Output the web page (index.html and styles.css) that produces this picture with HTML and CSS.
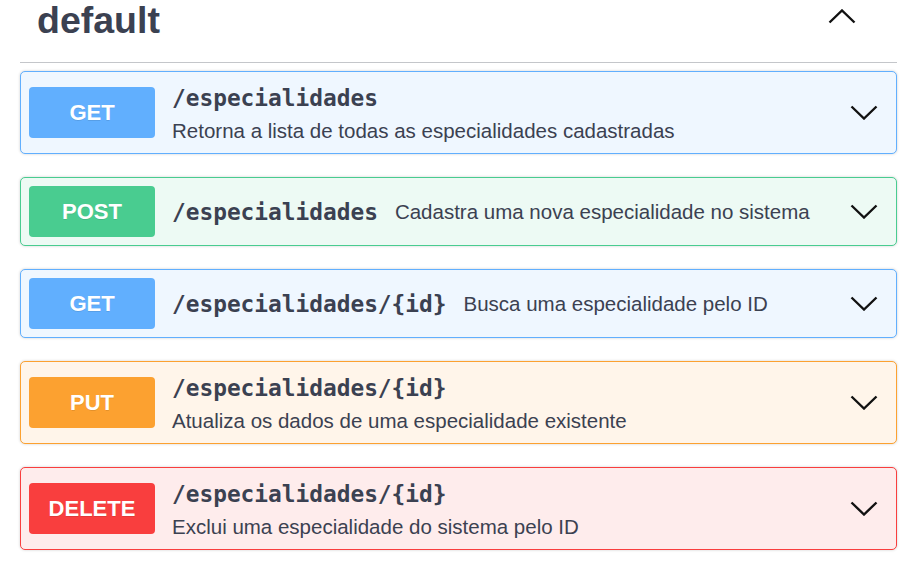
FILE: index.html
```html
<!DOCTYPE html>
<html lang="pt">
<head>
  <meta charset="UTF-8" />
  <title>Swagger UI - default</title>
  <link rel="stylesheet" href="styles.css">
</head>
<body>

  <div class="tag-section">
    <div class="tag-header">
      <h3>default</h3>
      <svg class="arrow-up" width="28" height="15" viewBox="0 0 28 15">
        <polyline points="1.5,13.5 14,1.5 26.5,13.5" />
      </svg>
    </div>

    <div class="opblock get">
      <span class="method">GET</span>
      <div class="summary stacked">
        <span class="path">/especialidades</span>
        <span class="desc">Retorna a lista de todas as especialidades cadastradas</span>
      </div>
      <svg class="arrow" width="28" height="15" viewBox="0 0 28 15"><polyline points="1.5,1.5 14,13.5 26.5,1.5" /></svg>
    </div>

    <div class="opblock post">
      <span class="method">POST</span>
      <div class="summary">
        <span class="path">/especialidades</span>
        <span class="desc">Cadastra uma nova especialidade no sistema</span>
      </div>
      <svg class="arrow" width="28" height="15" viewBox="0 0 28 15"><polyline points="1.5,1.5 14,13.5 26.5,1.5" /></svg>
    </div>

    <div class="opblock get">
      <span class="method">GET</span>
      <div class="summary">
        <span class="path">/especialidades/{id}</span>
        <span class="desc">Busca uma especialidade pelo ID</span>
      </div>
      <svg class="arrow" width="28" height="15" viewBox="0 0 28 15"><polyline points="1.5,1.5 14,13.5 26.5,1.5" /></svg>
    </div>

    <div class="opblock put">
      <span class="method">PUT</span>
      <div class="summary stacked">
        <span class="path">/especialidades/{id}</span>
        <span class="desc">Atualiza os dados de uma especialidade existente</span>
      </div>
      <svg class="arrow" width="28" height="15" viewBox="0 0 28 15"><polyline points="1.5,1.5 14,13.5 26.5,1.5" /></svg>
    </div>

    <div class="opblock delete">
      <span class="method">DELETE</span>
      <div class="summary stacked">
        <span class="path">/especialidades/{id}</span>
        <span class="desc">Exclui uma especialidade do sistema pelo ID</span>
      </div>
      <svg class="arrow" width="28" height="15" viewBox="0 0 28 15"><polyline points="1.5,1.5 14,13.5 26.5,1.5" /></svg>
    </div>
  </div>

</body>
</html>
```

FILE: styles.css
```css
body {
  margin: 0;
  background: #fff;
  font-family: "Liberation Sans", Arial, sans-serif;
  color: #3b4151;
}

.tag-section {
  margin: 0 13px 0 20px;
}

.tag-header {
  display: flex;
  justify-content: space-between;
  align-items: flex-start;
  height: 62px;
  padding: 0 41px 0 17px;
  border-bottom: 1px solid rgba(59, 65, 81, 0.3);
}

.tag-header h3 {
  margin: 0;
  font-size: 37.5px;
  line-height: 40px;
  font-weight: bold;
  color: #3b4151;
}

.arrow-up {
  margin-top: 9px;
}

.arrow-up polyline,
.arrow polyline {
  fill: none;
  stroke: #111;
  stroke-width: 2.4;
}

.opblock {
  display: flex;
  align-items: center;
  margin-bottom: 23px;
  padding: 8px;
  border: 1px solid;
  border-radius: 5px;
  box-shadow: 0 0 3px rgba(0, 0, 0, 0.19);
}

.tag-header + .opblock {
  margin-top: 8px;
}

.opblock .method {
  flex: none;
  width: 126px;
  height: 51px;
  line-height: 51px;
  text-align: center;
  border-radius: 4px;
  color: #fff;
  font-size: 22px;
  font-weight: bold;
  text-shadow: 0 1px 0 rgba(0, 0, 0, 0.1);
}

.summary {
  display: flex;
  align-items: center;
  margin-left: 17px;
}

.summary.stacked {
  flex-direction: column;
  align-items: flex-start;
}

.path {
  font-family: "DejaVu Sans Mono", monospace;
  font-weight: bold;
  font-size: 22.8px;
  line-height: 36px;
  margin-right: 17px;
}

.desc {
  font-size: 20.5px;
  line-height: 29px;
}

.arrow {
  margin-left: auto;
  margin-right: 10px;
}

.get { background: #eff7ff; border-color: #61affe; }
.get .method { background: #61affe; }

.post { background: #edfaf4; border-color: #49cc90; }
.post .method { background: #49cc90; }

.put { background: #fff5ea; border-color: #fca130; }
.put .method { background: #fca130; }

.delete { background: #feecec; border-color: #f93e3e; }
.delete .method { background: #f93e3e; }
```
